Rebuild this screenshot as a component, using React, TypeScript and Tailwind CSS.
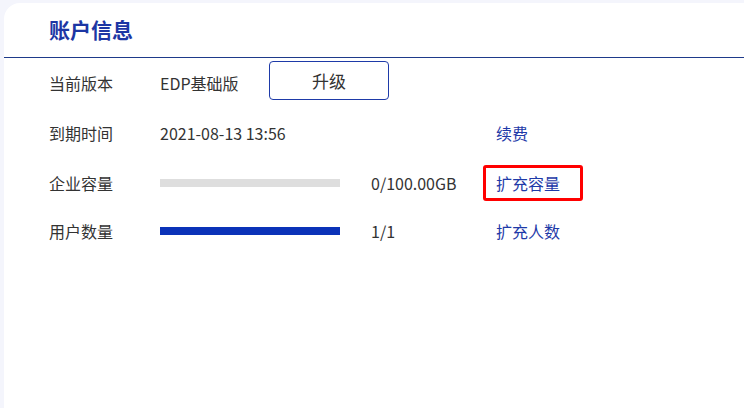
const font = { fontFamily: '"Noto Sans CJK SC", "Noto Sans", sans-serif' }

function Bar({ percent }: { percent: number }) {
  return (
    <div className="h-[8px] w-[180px] bg-[#dedede]">
      <div className="h-full bg-[#0b32b8]" style={{ width: `${percent}%` }} />
    </div>
  )
}

export default function App() {
  return (
    <div className="h-[408px] w-[744px] overflow-hidden bg-[#f4f5fc] pl-[4px] pt-[3px]" style={font}>
      <div className="h-[405px] rounded-tl-2xl bg-white">
        <div className="flex h-[55px] items-center border-b border-[#1e3a8a] pl-[45px]">
          <h1 className="text-[21px] font-bold text-[#1c36a4]">账户信息</h1>
        </div>

        <div className="grid grid-cols-[111px_336px_auto] pl-[45px] text-[16px] text-[#333]">
          {/* 当前版本 */}
          <div className="flex h-[50px] items-center">当前版本</div>
          <div className="flex h-[50px] items-start">
            <span className="mt-[14px] w-[109px] leading-[22px]">EDP基础版</span>
            <button className="mt-[3px] h-[39px] w-[120px] rounded border border-[#1e3aa8] text-[17px] text-[#333]">
              升级
            </button>
          </div>
          <div />

          {/* 到期时间 */}
          <div className="flex h-[50px] items-center">到期时间</div>
          <div className="flex h-[50px] items-center">2021-08-13 13:56</div>
          <div className="flex h-[50px] items-center text-[#1e3aa8]">续费</div>

          {/* 企业容量 */}
          <div className="flex h-[49px] items-center">企业容量</div>
          <div className="flex h-[49px] items-center">
            <Bar percent={0} />
            <span className="ml-[31px]">0/100.00GB</span>
          </div>
          <div className="flex h-[49px] items-center">
            <span className="-ml-[13px] flex h-[36px] w-[100px] items-center rounded-[3px] border-[3px] border-[#ff0000] pl-[10px] text-[#1e3aa8]">
              扩充容量
            </span>
          </div>

          {/* 用户数量 */}
          <div className="flex h-[48px] items-center">用户数量</div>
          <div className="flex h-[48px] items-center">
            <Bar percent={100} />
            <span className="ml-[31px]">1/1</span>
          </div>
          <div className="flex h-[48px] items-center text-[#1e3aa8]">扩充人数</div>
        </div>
      </div>
    </div>
  )
}
